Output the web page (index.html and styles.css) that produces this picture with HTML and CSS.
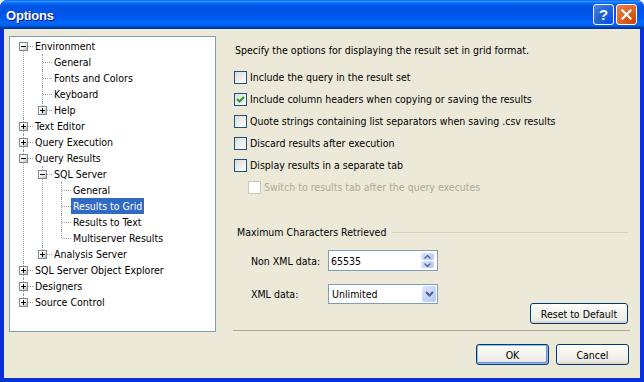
FILE: index.html
```html
<!DOCTYPE html>
<html>
<head>
<meta charset="UTF-8">
<title>Options</title>
<link rel="stylesheet" href="styles.css">
</head>
<body>
<div class="window">
    <div class="titlebar">
        <span class="title">Options</span>
        <div class="controls">
            <button class="ctl help">?</button>
            <button class="ctl close">
                <svg width="11" height="11" viewBox="0 0 11 11"><path d="M1.5 1.5 L9.5 9.5 M9.5 1.5 L1.5 9.5" stroke="#fff" stroke-width="2.2" stroke-linecap="square"/></svg>
            </button>
        </div>
    </div>

    <div class="client">
        <div class="main">
            <!-- left tree -->
            <div class="tree">
                <ul class="nodes root">
                    <li>
                        <div class="row"><span class="gutter"><i class="exp"></i></span><span class="label">Environment</span></div>
                        <ul class="nodes">
                            <li><div class="row"><span class="gutter"></span><span class="label">General</span></div></li>
                            <li><div class="row"><span class="gutter"></span><span class="label">Fonts and Colors</span></div></li>
                            <li><div class="row"><span class="gutter"></span><span class="label">Keyboard</span></div></li>
                            <li><div class="row"><span class="gutter"><i class="exp plus"></i></span><span class="label">Help</span></div></li>
                        </ul>
                    </li>
                    <li><div class="row"><span class="gutter"><i class="exp plus"></i></span><span class="label">Text Editor</span></div></li>
                    <li><div class="row"><span class="gutter"><i class="exp plus"></i></span><span class="label">Query Execution</span></div></li>
                    <li>
                        <div class="row"><span class="gutter"><i class="exp"></i></span><span class="label">Query Results</span></div>
                        <ul class="nodes">
                            <li>
                                <div class="row"><span class="gutter"><i class="exp"></i></span><span class="label">SQL Server</span></div>
                                <ul class="nodes">
                                    <li><div class="row"><span class="gutter"></span><span class="label">General</span></div></li>
                                    <li><div class="row"><span class="gutter"></span><span class="label selected">Results to Grid</span></div></li>
                                    <li><div class="row"><span class="gutter"></span><span class="label">Results to Text</span></div></li>
                                    <li><div class="row"><span class="gutter"></span><span class="label">Multiserver Results</span></div></li>
                                </ul>
                            </li>
                            <li><div class="row"><span class="gutter"><i class="exp plus"></i></span><span class="label">Analysis Server</span></div></li>
                        </ul>
                    </li>
                    <li><div class="row"><span class="gutter"><i class="exp plus"></i></span><span class="label">SQL Server Object Explorer</span></div></li>
                    <li><div class="row"><span class="gutter"><i class="exp plus"></i></span><span class="label">Designers</span></div></li>
                    <li><div class="row"><span class="gutter"><i class="exp plus"></i></span><span class="label">Source Control</span></div></li>
                </ul>
            </div>

            <!-- right page -->
            <div class="panel">
                <p class="desc">Specify the options for displaying the result set in grid format.</p>
                <div class="checks">
                    <label class="check"><span class="cb"></span>Include the query in the result set</label>
                    <label class="check"><span class="cb"><svg width="11" height="11" viewBox="0 0 11 11"><path d="M2 5 L4.5 7.5 L9 3" fill="none" stroke="#21A121" stroke-width="2"/></svg></span>Include column headers when copying or saving the results</label>
                    <label class="check"><span class="cb"></span>Quote strings containing list separators when saving .csv results</label>
                    <label class="check"><span class="cb"></span>Discard results after execution</label>
                    <label class="check"><span class="cb"></span>Display results in a separate tab</label>
                    <label class="check sub disabled"><span class="cb"></span>Switch to results tab after the query executes</label>
                </div>

                <div class="group-head"><span>Maximum Characters Retrieved</span><span class="group-line"></span></div>
                <div class="field">
                    <span class="field-label">Non XML data:</span>
                    <div class="box">
                        <span class="value">65535</span>
                        <span class="spin">
                            <span class="spin-btn"><svg width="7" height="4" viewBox="0 0 7 4"><path d="M0.5 3.5 L3.5 0.5 L6.5 3.5" fill="none" stroke="#4D6185" stroke-width="1.3"/></svg></span>
                            <span class="spin-btn"><svg width="7" height="4" viewBox="0 0 7 4"><path d="M0.5 0.5 L3.5 3.5 L6.5 0.5" fill="none" stroke="#4D6185" stroke-width="1.3"/></svg></span>
                        </span>
                    </div>
                </div>
                <div class="field second">
                    <span class="field-label">XML data:</span>
                    <div class="box select">
                        <span class="value">Unlimited</span>
                        <span class="drop"><svg width="9" height="6" viewBox="0 0 9 6"><path d="M1 1 L4.5 4.5 L8 1" fill="none" stroke="#4D6185" stroke-width="2"/></svg></span>
                    </div>
                </div>
                <button class="btn reset">Reset to Default</button>
            </div>
        </div>

        <div class="footer">
            <button class="btn default">OK</button>
            <button class="btn">Cancel</button>
        </div>
    </div>
</div>
</body>
</html>
```

FILE: styles.css
```css
body {
    margin: 0;
    background: #fff;
    font-family: "DejaVu Sans Condensed", "Liberation Sans", sans-serif;
    font-size: 10.5px;
    color: #000;
}
.window {
    width: 644px;
    height: 382px;
    display: flex;
    flex-direction: column;
    background: #0831d9;
    border-radius: 7px 7px 0 0;
    overflow: hidden;
}
.titlebar {
    height: 29px;
    flex: none;
    display: flex;
    align-items: center;
    padding: 0 7px 0 6px;
    background: linear-gradient(to bottom, #0058ee 0%, #3593ff 4%, #288eff 6%, #127dff 8%, #036ffc 10%, #0262ee 14%, #0057e5 20%, #0054e3 24%, #0055eb 56%, #005bf5 66%, #026afe 76%, #0062ef 86%, #0052d6 92%, #0040ab 94%, #003092 100%);
}
.title {
    flex: 1;
    color: #fff;
    font-family: "Liberation Sans", sans-serif;
    font-weight: bold;
    font-size: 13px;
    letter-spacing: -0.2px;
    text-shadow: 1px 1px #0f1089;
    padding-top: 1px;
}
.controls {
    display: flex;
    gap: 2px;
}
.ctl {
    width: 21px;
    height: 21px;
    padding: 0;
    border: 1px solid #fff;
    border-radius: 3px;
    display: flex;
    align-items: center;
    justify-content: center;
    color: #fff;
    font-family: "Liberation Sans", sans-serif;
    font-weight: bold;
    font-size: 15px;
}
.help {
    background: radial-gradient(circle at 90% 90%, #0054e9 0%, #2263d5 55%, #4d84f1 100%);
}
.close {
    background: radial-gradient(circle at 90% 90%, #cc4600 0%, #dc6527 55%, #e8865c 100%);
}

.client {
    flex: 1;
    margin: 0 4px 4px 4px;
    background: #ece9d8;
    padding: 7px 10px 0 5px;
}
.main {
    display: flex;
    align-items: flex-start;
}

/* tree */
.tree {
    width: 207px;
    height: 296px;
    box-sizing: border-box;
    flex: none;
    border: 1px solid #7f9db9;
    background: #fff;
    padding-top: 1px;
    overflow: hidden;
}
.nodes {
    list-style: none;
    margin: 0;
    padding: 0 0 0 19px;
}
.nodes.root {
    padding-left: 4px;
}
.nodes li {
    position: relative;
}
.nodes li::before {
    content: '';
    position: absolute;
    left: 9px;
    top: 0;
    bottom: 0;
    border-left: 1px dotted #a0a0a0;
}
.nodes li:last-child::before {
    bottom: auto;
    height: 8px;
}
.nodes.root > li:first-child::before {
    top: 8px;
}
.row {
    display: flex;
    height: 16px;
}
.gutter {
    position: relative;
    width: 19px;
    height: 16px;
    flex: none;
}
.gutter::after {
    content: '';
    position: absolute;
    left: 10px;
    top: 8px;
    width: 9px;
    border-top: 1px dotted #a0a0a0;
}
.exp {
    position: absolute;
    left: 5px;
    top: 4px;
    width: 9px;
    height: 9px;
    box-sizing: border-box;
    border: 1px solid #7a8a99;
    background: linear-gradient(135deg, #fff 30%, #c6c2b6);
    z-index: 1;
}
.exp::before {
    content: '';
    position: absolute;
    left: 1px;
    top: 3px;
    width: 5px;
    height: 1px;
    background: #000;
}
.exp.plus::after {
    content: '';
    position: absolute;
    left: 3px;
    top: 1px;
    width: 1px;
    height: 5px;
    background: #000;
}
.label {
    padding: 1px 2px 0;
    line-height: 15px;
    white-space: nowrap;
}
.label.selected {
    background: #316ac5;
    color: #fff;
}

/* right page */
.panel {
    flex: 1;
    height: 295px;
    box-sizing: border-box;
    margin-left: 17px;
    padding: 7px 2px 0 1px;
    display: flex;
    flex-direction: column;
    border-bottom: 1px solid #aca899;
}
.desc {
    margin: 0 0 0 1px;
    line-height: 14px;
}
.checks {
    margin-top: 9px;
}
.check {
    display: flex;
    align-items: center;
    height: 22px;
}
.check.sub {
    padding-left: 14px;
}
.cb {
    width: 13px;
    height: 13px;
    box-sizing: border-box;
    flex: none;
    margin-right: 3px;
    border: 1px solid #1c5180;
    background: linear-gradient(135deg, #dcdcd7, #fff);
    display: flex;
    align-items: center;
    justify-content: center;
}
.disabled {
    color: #aca899;
}
.disabled .cb {
    border-color: #cac8bb;
    background: #fff;
}
.group-head {
    margin-top: 27px;
    display: flex;
    align-items: center;
    line-height: 14px;
    padding-left: 3px;
}
.group-line {
    flex: 1;
    height: 1px;
    margin-left: 6px;
    background: #d0d0bf;
}
.field {
    display: flex;
    align-items: center;
    padding-left: 17px;
    margin-top: 11px;
}
.field.second {
    margin-top: 13px;
}
.field-label {
    width: 77px;
}
.box {
    width: 110px;
    height: 21px;
    box-sizing: border-box;
    border: 1px solid #7f9db9;
    background: #fff;
    display: flex;
    align-items: center;
}
.box.select {
    height: 20px;
}
.value {
    flex: 1;
    padding-left: 2px;
}
.select .value {
    padding-left: 3px;
}
.spin {
    width: 13px;
    height: 15px;
    margin-right: 3px;
    display: flex;
    flex-direction: column;
    gap: 1px;
}
.spin-btn, .drop {
    flex: 1;
    display: flex;
    align-items: center;
    justify-content: center;
    border-radius: 2px;
    background: linear-gradient(135deg, #dbe6fd, #b4c8f6);
}
.drop {
    flex: none;
    width: 14px;
    height: 16px;
    margin-right: 1px;
}
.btn {
    height: 21px;
    box-sizing: border-box;
    padding: 0 6px;
    border: 1px solid #003c74;
    border-radius: 3px;
    background: linear-gradient(to bottom, #fff 0%, #f5f4ee 40%, #ecebe6 86%, #d6d0c5 100%);
    font-family: inherit;
    font-size: inherit;
    color: #000;
}
.reset {
    align-self: flex-end;
    margin-top: -1px;
    width: 98px;
}
.footer {
    display: flex;
    justify-content: flex-end;
    gap: 7px;
    padding: 12px 1px 0 0;
}
.footer .btn {
    width: 73px;
}
.btn.default {
    box-shadow: inset 0 0 0 1px #98b8ea, inset -1px -1px 0 1px #6c8fd9;
}
```
